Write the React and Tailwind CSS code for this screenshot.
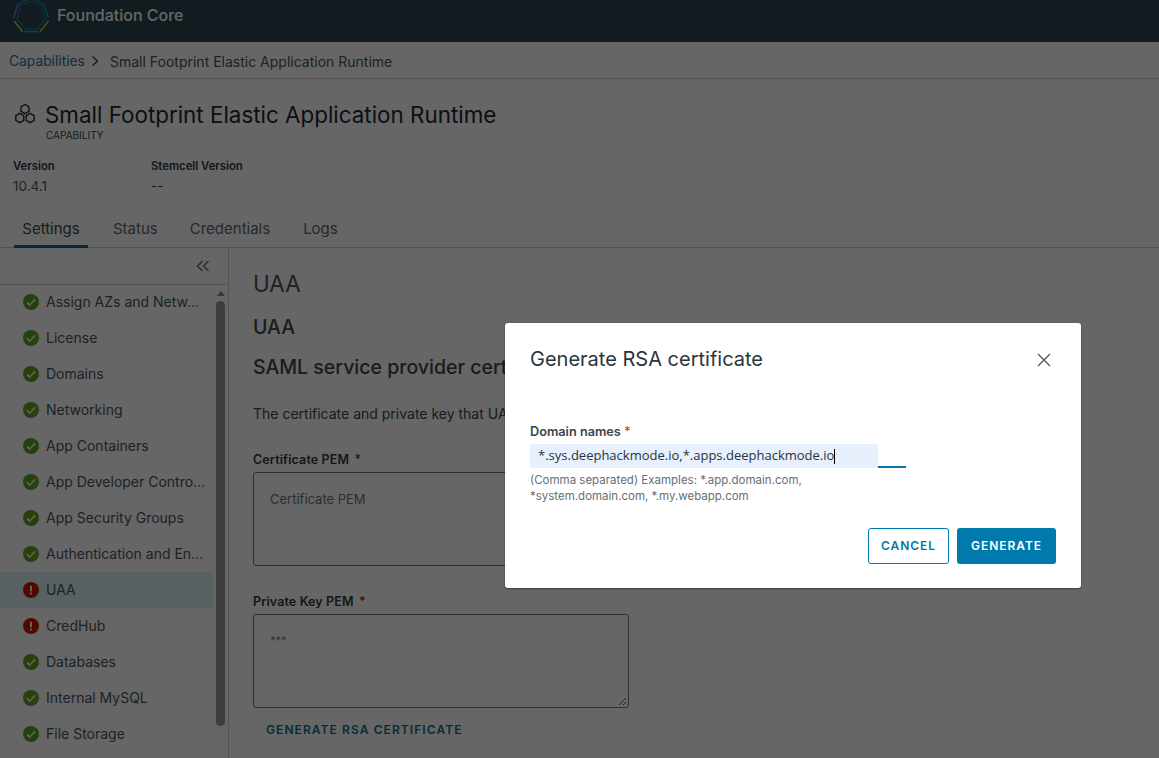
const font = "font-['Inter','Liberation_Sans',sans-serif]";

const items = [
  ["Assign AZs and Netw…", "ok"],
  ["License", "ok"],
  ["Domains", "ok"],
  ["Networking", "ok"],
  ["App Containers", "ok"],
  ["App Developer Contro…", "ok"],
  ["App Security Groups", "ok"],
  ["Authentication and En…", "ok"],
  ["UAA", "err", true],
  ["CredHub", "err"],
  ["Databases", "ok"],
  ["Internal MySQL", "ok"],
  ["File Storage", "ok"],
];

function StatusIcon({ type }) {
  if (type === "ok") {
    return (
      <svg width="16" height="16" viewBox="0 0 16 16" className="shrink-0">
        <circle cx="8" cy="8" r="8" fill="#62a420" />
        <path d="M3.9 8.2 L6.8 11 L12 5.6" fill="none" stroke="#ffffff" strokeWidth="1.4" />
      </svg>
    );
  }
  return (
    <svg width="16" height="16" viewBox="0 0 16 16" className="shrink-0">
      <circle cx="8" cy="8" r="8" fill="#c21d00" />
      <rect x="7" y="3.4" width="2" height="6" rx="1" fill="#ffffff" />
      <circle cx="8" cy="11.6" r="1.15" fill="#ffffff" />
    </svg>
  );
}

function Logo() {
  return (
    <svg width="38" height="36" viewBox="0 0 38 36" className="shrink-0 -mt-[2px]" fill="none" strokeWidth="1.7">
      <path d="M19 0 L32 6 L36.5 20" stroke="#1f86ad" />
      <path d="M19 0 L6 6" stroke="#1f86ad" />
      <path d="M6 6 L1.5 20" stroke="#8f68d8" />
      <path d="M2 23 L10.5 33.5" stroke="#9fd42f" />
      <path d="M36.5 23 L28 33.5" stroke="#9fd42f" />
      <path d="M12.5 33.5 L26.5 33.5" stroke="#1fa8d8" />
      <path d="M19 3 L29.4 7.8 L33.4 21.2 L25.4 30.8 L13 30.8 L5 21.2 L8.2 8 Z" stroke="#1c7fa3" strokeWidth="1.1" />
    </svg>
  );
}

function HexIcon() {
  return (
    <svg width="24" height="24" viewBox="0 0 24 24" fill="none" stroke="#1f2a30" strokeWidth="1.4" className="shrink-0">
      <path d="M12 2.5 L16 4.8 L16 9.4 L12 11.7 L8 9.4 L8 4.8 Z" />
      <path d="M6.8 11.4 L10.8 13.7 L10.8 18.3 L6.8 20.6 L2.8 18.3 L2.8 13.7 Z" />
      <path d="M17.2 11.4 L21.2 13.7 L21.2 18.3 L17.2 20.6 L13.2 18.3 L13.2 13.7 Z" />
    </svg>
  );
}

export default function App() {
  return (
    <div className={`${font} relative w-[1159px] h-[758px] overflow-hidden bg-white text-[#2f3b42]`}>
      <header className="h-[42px] bg-[#2d4450] flex items-start pl-[12px] gap-[7px] overflow-hidden">
        <Logo />
        <span className="text-white text-[16px] leading-[20px] mt-[5px] font-medium">Foundation Core</span>
      </header>

      <nav className="h-[37px] border-b border-[#d0d0d0] flex items-center pl-[9px] pt-[2px] text-[14px]">
        <span className="text-[#2f6f92] text-[13.8px] w-[75px] whitespace-nowrap">Capabilities</span>
        <svg width="10" height="12" viewBox="0 0 10 12" fill="none" stroke="#3a464d" strokeWidth="1.4" className="ml-[6px] mr-[10px]">
          <path d="M2.5 1.5 L7.5 6 L2.5 10.5" />
        </svg>
        <span className="text-[#4a555c]">Small Footprint Elastic Application Runtime</span>
      </nav>

      <section className="pl-[13px] pt-[20px]">
        <div className="flex items-center gap-[8px] h-[30px]">
          <HexIcon />
          <h1 className="text-[22.4px] pt-[2px] text-[#1f2a30] font-normal whitespace-nowrap">Small Footprint Elastic Application Runtime</h1>
        </div>
        <div className="pl-[33px] text-[10px] leading-[12px] text-[#3a464d]">CAPABILITY</div>
        <div className="flex mt-[18px]">
          <div className="w-[138px]">
            <div className="text-[11.3px] font-semibold text-[#2f3b42] h-[14px] leading-[14px]">Version</div>
            <div className="text-[13.5px] text-[#3f5f70] mt-[4px] leading-[18px]">10.4.1</div>
          </div>
          <div>
            <div className="text-[11.3px] font-semibold text-[#2f3b42] h-[14px] leading-[14px]">Stemcell Version</div>
            <div className="text-[13.5px] text-[#3a464d] mt-[4px] leading-[18px]">--</div>
          </div>
        </div>
      </section>

      <div className="h-[50px] mt-[3px] border-b border-[#cfcfcf] pl-[14px] flex items-stretch text-[15px] text-[#5c676e]">
        <div className="w-[74px] border-b-[3px] border-[#0f6f95] text-center text-[#3a464d] pt-[20px] -mb-px">Settings</div>
        <div className="ml-[25px] pt-[20px]">Status</div>
        <div className="ml-[32px] pt-[20px]">Credentials</div>
        <div className="ml-[33px] pt-[20px]">Logs</div>
      </div>

      <div className="flex">
        <aside className="w-[229px] shrink-0 border-r border-[#cfcfcf] h-[520px]">
          <div className="h-[37px] border-b border-[#cfcfcf] flex items-center justify-end pr-[18px]">
            <svg width="14" height="12" viewBox="0 0 14 12" fill="none" stroke="#5c676e" strokeWidth="1.2">
              <path d="M6.5 1 L1.5 6 L6.5 11" />
              <path d="M12.5 1 L7.5 6 L12.5 11" />
            </svg>
          </div>
          <div className="relative">
            <ul className="-mt-[1px]">
              {items.map(([label, type, active]) => (
                <li
                  key={label}
                  className={`h-[36px] w-[213px] flex items-center pl-[23px] gap-[7px] text-[14px] whitespace-nowrap text-[#4a555c] ${active ? "bg-[#dff0f6]" : ""}`}
                >
                  <StatusIcon type={type} />
                  <span className="pb-[2px]">{label}</span>
                </li>
              ))}
            </ul>
            <div className="absolute left-[216px] top-[7px] w-[9px] flex flex-col items-center">
              <div className="w-0 h-0 border-x-[4.5px] border-x-transparent border-b-[5px] border-b-[#8a8a8a]"></div>
              <div className="w-[9px] h-[425px] mt-[5px] rounded-full bg-[#999999]"></div>
            </div>
          </div>
        </aside>

        <main className="pl-[24px] flex-1">
          <h2 className="text-[22.5px] leading-[28px] mt-[22px] text-[#4a555c]">UAA</h2>
          <h3 className="text-[19.5px] leading-[24px] mt-[17px] font-medium text-[#3a464d]">UAA</h3>
          <h4 className="text-[19.5px] leading-[24px] mt-[16px] font-medium text-[#3a464d] whitespace-nowrap">SAML service provider certificates</h4>
          <p className="text-[14px] leading-[20px] mt-[25px] text-[#3a464d] whitespace-nowrap">The certificate and private key that UAA uses for SAML signing</p>

          <label className="block text-[12.5px] leading-[16px] mt-[28px] font-semibold tracking-[0.01em] text-[#2f3b42]">
            Certificate PEM <span className="text-[#c21d00] ml-[2px]">*</span>
          </label>
          <div className="w-[376px] h-[94px] mt-[4px] border border-[#6e7a81] rounded-[3px] pl-[16px] pt-[18px] text-[13px] leading-[16px] text-[#6b767d]">
            Certificate PEM
          </div>

          <label className="block text-[12.5px] leading-[16px] mt-[28px] font-semibold tracking-[0.01em] text-[#2f3b42]">
            Private Key PEM <span className="text-[#c21d00] ml-[2px]">*</span>
          </label>
          <div className="relative w-[376px] h-[94px] mt-[4px] border border-[#6e7a81] rounded-[3px] pl-[16px] pt-[17px] text-[11px] leading-[16px] text-[#7d868c]">
            ***
            <svg width="10" height="10" viewBox="0 0 10 10" className="absolute right-[1px] bottom-[1px]" stroke="#5c5c5c" strokeWidth="1">
              <path d="M2 9 L9 2 M6 9 L9 6" />
            </svg>
          </div>
          <div className="mt-[14px] ml-[13px] text-[12px] leading-[16px] font-semibold tracking-[0.09em] text-[#0f6f95]">GENERATE RSA CERTIFICATE</div>
        </main>
      </div>

      <div className="absolute inset-0 bg-black/60">
        <div className="absolute left-[505px] top-[323px] w-[576px] h-[265px] bg-white rounded-[3px] shadow-[0_1px_2px_rgba(0,0,0,0.4)] pl-[25px] pr-[25px] pt-[22px] text-[#2f3b42]">
          <div className="flex items-center justify-between h-[28px]">
            <h2 className="text-[20px] text-[#2a353b]">Generate RSA certificate</h2>
            <svg width="14" height="14" viewBox="0 0 14 14" fill="none" stroke="#4a555c" strokeWidth="1.3" className="mr-[5px] mt-[2px]">
              <path d="M1 1 L13 13 M13 1 L1 13" />
            </svg>
          </div>
          <label className="block mt-[50px] text-[12.7px] leading-[18px] font-semibold text-[#3a464d]">
            Domain names <span className="text-[#e0502f]">*</span>
          </label>
          <div className="w-[376px] h-[24px] mt-[3px] border-b-2 border-[#0079ad]">
            <div className="w-[348px] h-[24px] bg-[#e8f0fe] pl-[8px] flex items-center font-['Open_Sans',sans-serif] text-[13px] text-[#27333a]">
              <span>*.sys.deephackmode.io,*.apps.deephackmode.io</span>
              <span className="w-px h-[15px] bg-black"></span>
            </div>
          </div>
          <p className="mt-[4px] w-[340px] text-[11.5px] leading-[16px] text-[#666f75]">
            (Comma separated) Examples: *.app.domain.com, *system.domain.com, *.my.webapp.com
          </p>
          <div className="flex justify-end gap-[8px] mt-[24px]">
            <button className="w-[81px] h-[36px] rounded-[3px] border border-[#0079ad] text-[#0079ad] text-[12px] font-semibold tracking-[0.08em]">CANCEL</button>
            <button className="w-[99px] h-[36px] rounded-[3px] bg-[#0079ad] text-white text-[12px] font-semibold tracking-[0.08em]">GENERATE</button>
          </div>
        </div>
      </div>
    </div>
  );
}
